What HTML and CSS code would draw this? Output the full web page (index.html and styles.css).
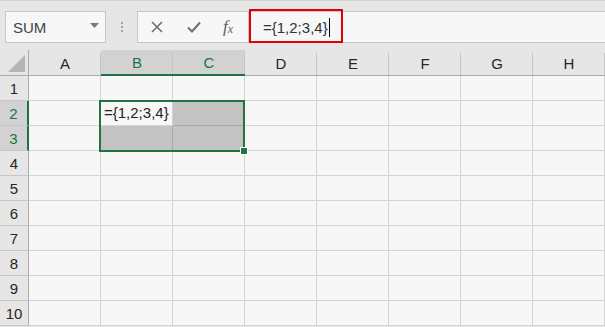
FILE: index.html
```html
<!DOCTYPE html>
<html lang="ja">
<head>
  <meta charset="UTF-8" />
  <title>SUM 配列定数</title>
  <link rel="stylesheet" href="styles.css">
</head>
<body>
  <div class="toolbar">
    <div class="namebox">
      <span>SUM</span>
      <svg class="drop" width="9" height="5" viewBox="0 0 9 5"><path d="M0 0H9L4.5 5Z" fill="#7a7a7a"/></svg>
    </div>
    <div class="grip"><i></i><i></i><i></i></div>
    <div class="fx-buttons">
      <svg width="12" height="12" viewBox="0 0 12 12"><path d="M1 1L11 11M11 1L1 11" stroke="#6e6e6e" stroke-width="1.6" fill="none"/></svg>
      <svg width="14" height="12" viewBox="0 0 14 12"><path d="M1 6.5L5 10.5L13 1.5" stroke="#6e6e6e" stroke-width="2" fill="none"/></svg>
      <span class="fx">f<sub>x</sub></span>
    </div>
    <div class="formula">
      <span class="formula-text">={1,2;3,4}</span><span class="caret"></span>
      <div class="highlight"></div>
    </div>
  </div>

  <div class="sheet">
    <div class="corner"><svg width="17" height="17" viewBox="0 0 17 17"><path d="M17 0V17H0Z" fill="#b5b5b5"/></svg></div>
    <div class="col-head">A</div>
    <div class="col-head sel">B</div>
    <div class="col-head sel">C</div>
    <div class="col-head">D</div>
    <div class="col-head">E</div>
    <div class="col-head">F</div>
    <div class="col-head">G</div>
    <div class="col-head">H</div>

    <div class="row-head">1</div>
    <div class="cell"></div><div class="cell"></div><div class="cell"></div><div class="cell"></div><div class="cell"></div><div class="cell"></div><div class="cell"></div><div class="cell"></div>

    <div class="row-head sel">2</div>
    <div class="cell"></div><div class="cell active">={1,2;3,4}</div><div class="cell filled"></div><div class="cell"></div><div class="cell"></div><div class="cell"></div><div class="cell"></div><div class="cell"></div>

    <div class="row-head sel">3</div>
    <div class="cell"></div><div class="cell filled"></div><div class="cell filled"></div><div class="cell"></div><div class="cell"></div><div class="cell"></div><div class="cell"></div><div class="cell"></div>

    <div class="row-head">4</div>
    <div class="cell"></div><div class="cell"></div><div class="cell"></div><div class="cell"></div><div class="cell"></div><div class="cell"></div><div class="cell"></div><div class="cell"></div>

    <div class="row-head">5</div>
    <div class="cell"></div><div class="cell"></div><div class="cell"></div><div class="cell"></div><div class="cell"></div><div class="cell"></div><div class="cell"></div><div class="cell"></div>

    <div class="row-head">6</div>
    <div class="cell"></div><div class="cell"></div><div class="cell"></div><div class="cell"></div><div class="cell"></div><div class="cell"></div><div class="cell"></div><div class="cell"></div>

    <div class="row-head">7</div>
    <div class="cell"></div><div class="cell"></div><div class="cell"></div><div class="cell"></div><div class="cell"></div><div class="cell"></div><div class="cell"></div><div class="cell"></div>

    <div class="row-head">8</div>
    <div class="cell"></div><div class="cell"></div><div class="cell"></div><div class="cell"></div><div class="cell"></div><div class="cell"></div><div class="cell"></div><div class="cell"></div>

    <div class="row-head">9</div>
    <div class="cell"></div><div class="cell"></div><div class="cell"></div><div class="cell"></div><div class="cell"></div><div class="cell"></div><div class="cell"></div><div class="cell"></div>

    <div class="row-head">10</div>
    <div class="cell"></div><div class="cell"></div><div class="cell"></div><div class="cell"></div><div class="cell"></div><div class="cell"></div><div class="cell"></div><div class="cell"></div>

    <!-- B2:C3 の選択枠 -->
    <div class="selection"><span class="handle"></span></div>
  </div>
</body>
</html>
```

FILE: styles.css
```css
body {
  margin: 0;
  background: #e6e6e6;
  font-family: "Liberation Sans", Arial, sans-serif;
  font-size: 15px;
  color: #262626;
  overflow: hidden;
}
.toolbar {
  display: flex;
  align-items: flex-start;
  height: 50px;
  box-sizing: border-box;
  border-top: 1px solid #d4d4d4;
  padding-top: 10px;
}
.namebox {
  margin-left: 5px;
  width: 101px;
  height: 32px;
  box-sizing: border-box;
  border: 1px solid #c6c6c6;
  background: #f7f7f7;
  display: flex;
  align-items: center;
  justify-content: space-between;
  padding: 0 6px 0 7px;
  color: #444;
}
.namebox .drop {
  margin-top: -3px;
}
.grip {
  width: 31px;
  height: 32px;
  display: flex;
  flex-direction: column;
  align-items: center;
  justify-content: center;
  gap: 2px;
}
.grip i {
  width: 2px;
  height: 2px;
  background: #a2a2a2;
}
.fx-buttons {
  width: 112px;
  height: 32px;
  box-sizing: border-box;
  border: 1px solid #c6c6c6;
  background: #f7f7f7;
  display: flex;
  align-items: center;
  padding-left: 13px;
  gap: 24px;
}
.fx {
  font-family: "Liberation Serif", serif;
  font-style: italic;
  font-size: 17px;
  color: #5e5e5e;
  margin-left: -2px;
}
.fx sub {
  font-size: 12px;
  vertical-align: -1px;
}
.formula {
  position: relative;
  flex: 1;
  height: 32px;
  box-sizing: border-box;
  border: 1px solid #c6c6c6;
  border-right: none;
  background: #f7f7f7;
  display: flex;
  align-items: center;
  padding-left: 13px;
  color: #333;
}
.caret {
  width: 1px;
  height: 19px;
  background: #000;
  margin-left: 1px;
}
.highlight {
  position: absolute;
  left: -1px;
  top: -3px;
  width: 94px;
  height: 34px;
  box-sizing: border-box;
  border: 2px solid #e00000;
}

.sheet {
  position: relative;
  display: grid;
  grid-template-columns: 29px repeat(8, 72px);
  grid-template-rows: 26px;
  grid-auto-rows: 25px;
  background: #f7f7f7;
}
.corner,
.col-head,
.row-head {
  background: #e6e6e6;
  box-sizing: border-box;
  display: flex;
  align-items: center;
  justify-content: center;
}
.corner {
  border-right: 1px solid #ababab;
  border-bottom: 1px solid #ababab;
  justify-content: flex-end;
  align-items: flex-end;
  padding: 0 3px 3px 0;
}
.col-head {
  border-bottom: 1px solid #ababab;
  background: linear-gradient(#c6c6c6, #c6c6c6) right bottom / 1px 22px no-repeat, #e6e6e6;
  padding-top: 1px;
}
.col-head.sel {
  background-color: #d2d2d2;
  color: #217346;
  border-bottom: 2px solid #217346;
}
.row-head {
  border-right: 1px solid #ababab;
  border-bottom: 1px solid #c6c6c6;
}
.row-head.sel {
  background: #d2d2d2;
  color: #217346;
  border-right: 2px solid #217346;
}
.cell {
  box-sizing: border-box;
  border-right: 1px solid #d4d4d4;
  border-bottom: 1px solid #d4d4d4;
  white-space: nowrap;
  color: #222;
}
.cell.active {
  padding: 3px 0 0 3px;
}
.cell.filled {
  background: #c3c3c3;
  border-color: #a9a9a9;
}
.selection {
  position: absolute;
  left: 99px;
  top: 50px;
  width: 146px;
  height: 52px;
  box-sizing: border-box;
  border: 2px solid #217346;
}
.handle {
  position: absolute;
  right: -5px;
  bottom: -5px;
  width: 6px;
  height: 6px;
  background: #217346;
  border: 1px solid #fff;
}
```
